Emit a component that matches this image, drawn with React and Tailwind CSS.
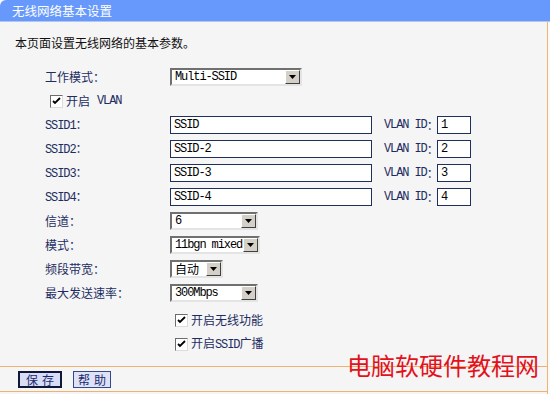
import React from 'react';

const mono = "font-['Liberation_Mono','Noto_Sans_CJK_SC',monospace] text-[12px] tracking-[-1.1px]";
const labelColor = 'text-[#1d2d62]';

const Arrow = () => (
    <div className="w-[15px] h-full bg-[#d4d0c8] border border-t-white border-l-white border-b-[#404040] border-r-[#404040] flex items-center justify-center">
        <svg width="7" height="4" viewBox="0 0 7 4">
            <path d="M0 0h7L3.5 4z" fill="#000" />
        </svg>
    </div>
);

const Select = ({ value, width, cjk }) => (
    <div
        className="h-[18px] bg-white border-2 border-t-[#707070] border-l-[#707070] border-b-[#e4e4e4] border-r-[#e4e4e4] flex items-stretch"
        style={{ width }}
    >
        <div className={`flex-1 pl-[3px] flex items-center text-black leading-none whitespace-nowrap ${cjk ? 'text-[12px]' : mono}`}>
            {value}
        </div>
        <Arrow />
    </div>
);

const TextBox = ({ value, width }) => (
    <div
        className={`h-[18px] bg-white border border-[#1f2f5e] pl-[3px] flex items-center text-black leading-none ${mono}`}
        style={{ width }}
    >
        {value}
    </div>
);

const Check = () => (
    <div className="w-[13px] h-[13px] bg-white border border-t-[#6c6c6c] border-l-[#6c6c6c] border-b-[#dcdcdc] border-r-[#dcdcdc] flex items-center justify-center">
        <svg width="9" height="9" viewBox="0 0 9 9">
            <path d="M1 4l2 2 5-5" stroke="#000" strokeWidth="1.8" fill="none" />
        </svg>
    </div>
);

// label column is 125px wide so every control starts at x=170
const Row = ({ label, latin, children, className = '' }) => (
    <div className={`h-[24px] flex items-center ${className}`}>
        <div className={`w-[125px] leading-none whitespace-nowrap ${labelColor}`}>
            {latin ? (
                <>
                    <span className={mono}>{label}</span>
                    <span>：</span>
                </>
            ) : (
                label
            )}
        </div>
        {children}
    </div>
);

const ssids = [
    ['SSID1', 'SSID', '1'],
    ['SSID2', 'SSID-2', '2'],
    ['SSID3', 'SSID-3', '3'],
    ['SSID4', 'SSID-4', '4'],
];

export default function App() {
    return (
        <div className="relative w-[550px] h-[394px] bg-[#fafafa] overflow-hidden font-['Noto_Sans_CJK_SC',sans-serif] text-[12px]">
            {/* title bar */}
            <div className="h-[21px] bg-[#6699fb] rounded-tl-[6px] pl-[12px] text-white text-[12.5px] leading-[21px]">
                无线网络基本设置
            </div>
            <div className="h-px bg-[#b4c6ec]" />

            <div className="w-[548px] h-[372px] bg-[#f5f5f5] border-r border-[#f0b46e] flex flex-col">
                <p className="pl-[15px] pt-[13px] leading-[16px] text-[#111]">本页面设置无线网络的基本参数。</p>

                <div className="pl-[45px] mt-[14px] flex flex-col">
                    <Row label="工作模式：">
                        <Select value="Multi-SSID" width={132} />
                    </Row>

                    <div className="h-[24px] flex items-center pl-[5px] gap-[3px]">
                        <Check />
                        <span className={`leading-none ${labelColor}`}>开启</span>
                        <span className={`leading-none ${labelColor} ${mono} ml-[4px]`}>VLAN</span>
                    </div>

                    {ssids.map(([label, value, id]) => (
                        <Row key={label} label={label} latin>
                            <TextBox value={value} width={202} />
                            <span className={`ml-[12px] w-[53px] flex items-center leading-none whitespace-nowrap ${labelColor}`}>
                                <span className={mono}>VLAN ID</span>
                                <span>：</span>
                            </span>
                            <TextBox value={id} width={34} />
                        </Row>
                    ))}

                    <Row label="信道：">
                        <Select value="6" width={88} />
                    </Row>
                    <Row label="模式：">
                        <Select value="11bgn mixed" width={90} />
                    </Row>
                    <Row label="频段带宽：">
                        <Select value="自动" width={53} cjk />
                    </Row>
                    <Row label="最大发送速率：">
                        <Select value="300Mbps" width={88} />
                    </Row>

                    <div className="h-[24px] mt-[3px] flex items-center pl-[130px] gap-[3px]">
                        <Check />
                        <span className={`leading-none ${labelColor}`}>开启无线功能</span>
                    </div>
                    <div className="h-[24px] flex items-center pl-[130px] gap-[3px]">
                        <Check />
                        <span className={`leading-none ${labelColor}`}>
                            开启<span className={mono}>SSID</span>广播
                        </span>
                    </div>
                </div>

                <div className="mt-[10px] h-px bg-[#f0b070]" />
                <div className="flex items-center gap-[11px] pl-[18px] pt-[4px] pb-[3px]">
                    <button className="w-[44px] h-[17px] border-2 border-[#10183a] bg-[#d8dcf4] text-[#1c2a6e] text-[12px] leading-none tracking-[4px] pl-[4px]">
                        保存
                    </button>
                    <button className="w-[38px] h-[17px] border border-[#334a88] bg-[#dde2f6] text-[#1c2a6e] text-[12px] leading-none tracking-[4px] pl-[4px]">
                        帮助
                    </button>
                </div>
                <div className="h-px bg-[#f0b070]" />
            </div>

            {/* watermark */}
            <div className="absolute left-[347px] top-[353px] text-[24px] leading-none text-[#e2121c]">
                电脑软硬件教程网
            </div>
        </div>
    );
}
